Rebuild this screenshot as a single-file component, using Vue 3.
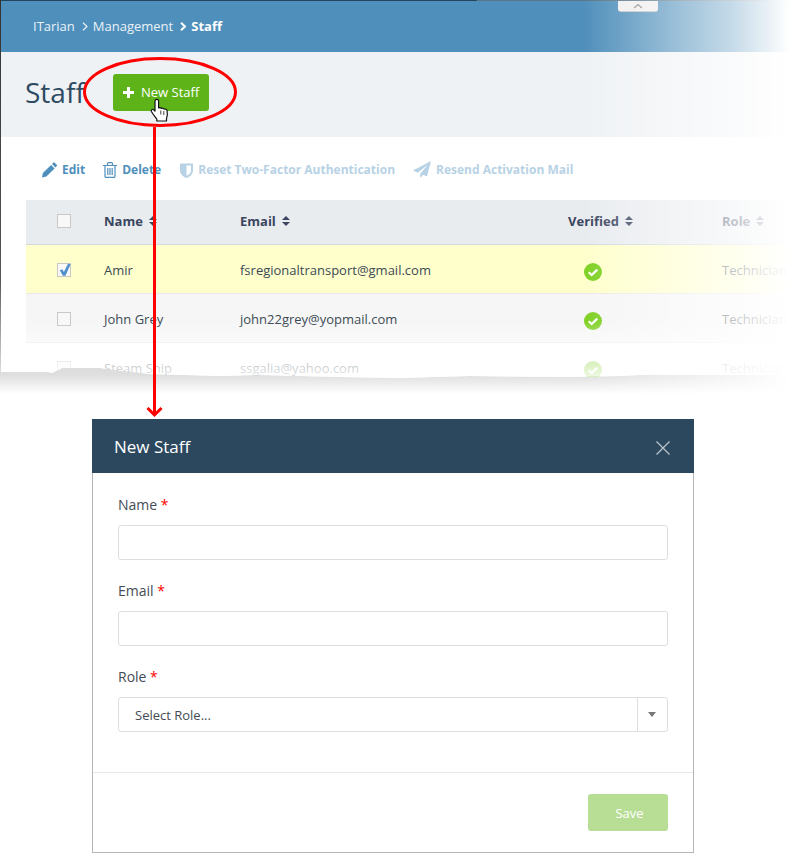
<template>
  <div class="page">
    <div class="shot-wrap">
      <div class="tear-shadow"></div>
      <div class="shot">
        <header class="crumbs">
          <span>ITarian</span>
          <svg class="sep" width="6" height="9" viewBox="0 0 6 9"><path d="M1 .7l4 3.800-4 3.800" fill="none" stroke="currentColor" stroke-width="1.200" /></svg>
          <span>Management</span>
          <svg class="sep" width="6" height="9" viewBox="0 0 6 9"><path d="M1 .7l4 3.800-4 3.800" fill="none" stroke="#fff" stroke-width="2" /></svg>
          <strong>Staff</strong>
        </header>
        <div class="title-row">
          <h1>Staff</h1>
          <button class="new-btn" type="button">
            <svg width="11" height="11" viewBox="0 0 11 11"><path d="M4 0h3v4h4v3H7v4H4V7H0V4h4z" fill="#fff" /></svg>
            New Staff
          </button>
        </div>
        <div class="toolbar">
          <span class="tool tool-edit">
            <svg width="16" height="16" viewBox="0 0 16 16"><path d="M1 15.500l.9-4.400 8.200-8.200 3.500 3.500-8.200 8.200zM11 2l1.300-1.300a1 1 0 0 1 1.400 0l2 2a1 1 0 0 1 0 1.400L14.500 5.400z" fill="currentColor" /></svg>
            Edit
          </span>
          <span class="tool tool-delete">
            <svg width="14" height="16" viewBox="0 0 14 16" fill="none" stroke="currentColor" stroke-width="1.200"><path d="M0 3.500h14M2 3.500v10.700a1.200 1.200 0 0 0 1.200 1.200h7.600a1.200 1.200 0 0 0 1.200-1.200V3.500M4.500 3.500V1.800a1.200 1.200 0 0 1 1.200-1.200h2.600a1.200 1.200 0 0 1 1.200 1.200v1.700M4.800 6v7M7 6v7M9.200 6v7" /></svg>
            Delete
          </span>
          <span class="tool tool-reset off">
            <svg width="13" height="16" viewBox="0 0 13 16"><path d="M0 1.500h13v7c0 3.500-3 6-6.500 7.500C3 14.500 0 12 0 8.500z" fill="currentColor" /><path d="M6.500 3.500h4.500v5c0 2.400-2 4.200-4.500 5.300z" fill="#fff" /></svg>
            Reset Two-Factor Authentication
          </span>
          <span class="tool tool-mail off">
            <svg width="18" height="17" viewBox="0 0 18 17"><path d="M18 0L0 9.500l4.800 2.200L15 3.500 7.200 12.800V17l2.900-3.300 3.900 1.700z" fill="currentColor" /></svg>
            Resend Activation Mail
          </span>
        </div>
        <div class="table">
          <div class="row head">
            <div><span class="box"></span></div>
            <div v-for="col in columns" :key="col" class="th">
              {{ col }}
              <svg width="8" height="10" viewBox="0 0 8 10"><path d="M4 0l4 4H0zM4 10L0 6h8z" fill="currentColor" /></svg>
            </div>
          </div>
          <div v-for="(staff, i) in rows" :key="staff.name" class="row" :class="{ picked: i === 0, grey: i === 1 }">
            <div>
              <span class="box">
                <svg v-if="i === 0" width="14" height="14" viewBox="0 0 14 14"><path d="M1.800 7.400l2.500-1.100 1.600 2.800L10 .8l2.600.5-5.200 11.500H5z" fill="#4f8fca" /></svg>
              </span>
            </div>
            <div>{{ staff.name }}</div>
            <div>{{ staff.email }}</div>
            <div class="verified">
              <svg width="18" height="18" viewBox="0 0 18 18"><circle cx="9" cy="9" r="9" fill="#7fd124" /><path d="M4.700 9.200l3 2.800 5.600-5.400" fill="none" stroke="#fff" stroke-width="2.200" /></svg>
            </div>
            <div>Technician</div>
          </div>
        </div>
        <div class="fade-bottom"></div>
        <div class="scroll-tab">
          <svg width="10" height="6" viewBox="0 0 10 6"><path d="M1 5l4-3.500L9 5" fill="none" stroke="#8a8a8a" stroke-width="1.300" /></svg>
        </div>
      </div>
      <div class="fade-right"></div>
    </div>

    <section class="modal">
      <div class="modal-head">
        <span>New Staff</span>
        <svg class="close" width="14" height="14" viewBox="0 0 14 14"><path d="M.5.500l13 13M13.500.500l-13 13" stroke="#b9c4cd" stroke-width="1.300" /></svg>
      </div>
      <div class="modal-body">
        <div class="label">Name <em>*</em></div>
        <div class="input"></div>
        <div class="label">Email <em>*</em></div>
        <div class="input"></div>
        <div class="label">Role <em>*</em></div>
        <div class="input select">
          <span class="select-text">Select Role...</span>
          <span class="select-arrow"></span>
        </div>
      </div>
      <div class="modal-foot">
        <button class="save" type="button">Save</button>
      </div>
    </section>

    <svg class="notes" width="800" height="430" viewBox="0 0 800 430">
      <ellipse cx="160" cy="92" rx="75.500" ry="33.500" fill="none" stroke="#f00" stroke-width="3" />
      <path d="M154.500 127v288" stroke="#f00" stroke-width="3" fill="none" />
      <path d="M147.500 408l7 7 7-7" stroke="#f00" stroke-width="3" fill="none" />
      <path d="M155 101c0-2.200 3.600-2.200 3.600 0v7c1-.8 2.400-.4 2.800.5.800-.6 2.300-.3 2.700.7 1-.5 2.800.1 3 1.500.5 3 .2 6-.6 7.800v2.500h-9.700v-2c-1.700-2.200-3.900-4.700-5.400-7.500-.8-1.500 1.100-2.900 2.300-1.700l1.300 1.300z" fill="#fff" stroke="#111" stroke-width="1.200" stroke-linejoin="round" />
      <path d="M160.800 110.500v4M163.800 111v4" stroke="#111" stroke-width=".8" />
    </svg>
  </div>
</template>

<script setup>
const columns = ['Name', 'Email', 'Verified', 'Role']

const rows = [
  { name: 'Amir', email: 'fsregionaltransport@gmail.com' },
  { name: 'John Grey', email: 'john22grey@yopmail.com' },
  { name: 'Steam Ship', email: 'ssgalia@yahoo.com' },
]
</script>

<style>
body {
  background: #fff;
}
</style>

<style scoped>
.page {
  position: relative;
  width: 800px;
  height: 855px;
  overflow: hidden;
  background: #fff;
  font-family: "Open Sans", "Liberation Sans", sans-serif;
  font-size: 13px;
  color: #3c4a55;
}

.shot-wrap {
  position: relative;
  height: 400px;
  margin-bottom: 19px;
}

.tear-shadow {
  position: absolute;
  left: 0;
  right: 0;
  top: 366px;
  height: 28px;
  background: linear-gradient(to bottom, #dcdcdc 0, #dedede 30%, #fff 100%);
}

.shot {
  position: relative;
  height: 380px;
  overflow: hidden;
  background: #fff;
  clip-path: polygon(0 372px, 48px 372px, 52px 373px, 62px 368px, 100px 368px, 115px 370px, 150px 374px, 220px 376px, 260px 375px, 340px 377px, 400px 378px, 470px 376px, 570px 377px, 620px 376px, 640px 375px, 800px 375px, 800px 0, 0 0);
}

.shot::before {
  content: "";
  position: absolute;
  left: 0;
  top: 0;
  z-index: 1;
  width: 1px;
  height: 372px;
  background: linear-gradient(to bottom, #333 0, #555 75%, #ddd 100%);
}

.crumbs {
  display: flex;
  align-items: center;
  height: 52px;
  padding: 0 0 1px 33px;
  box-sizing: border-box;
  background: #4f8fbb;
  border-top: 1px solid #2a4a5e;
  border-image: linear-gradient(to right, #24455b 476px, #5c7688 477px) 1;
  color: #eaf2f7;
  font-size: 13px;
}

.crumbs strong {
  color: #fff;
  font-weight: 700;
}

.sep {
  margin: 1px 5px 0 7px;
}

.title-row {
  display: flex;
  align-items: center;
  height: 85px;
  padding: 0 0 5px 25px;
  box-sizing: border-box;
  background: #eff2f5;
}

.title-row h1 {
  margin: 0;
  width: 88px;
  font-size: 28px;
  font-weight: 400;
  color: #2d4a62;
}

.new-btn {
  display: flex;
  align-items: center;
  gap: 7px;
  width: 96px;
  height: 37px;
  padding: 0 0 0 10px;
  border: 0;
  border-radius: 3px;
  background: #5eb319;
  color: #fff;
  font: 400 13px "Open Sans", sans-serif;
}

.toolbar {
  display: flex;
  align-items: center;
  height: 63px;
  padding: 2px 0 0 41px;
  box-sizing: border-box;
  font-size: 12px;
  font-weight: 700;
  color: #4f8fbb;
}

.tool {
  display: flex;
  align-items: center;
  gap: 5px;
}

.tool-edit {
  margin-right: 18px;
}

.tool-delete {
  margin-right: 19px;
}

.tool-reset {
  margin-right: 18px;
}

.off {
  color: #b7d2e5;
}

.table {
  margin-left: 26px;
}

.row {
  display: grid;
  grid-template-columns: 78px 136px 328px 154px 1fr;
  align-items: center;
  height: 49px;
  padding-top: 1px;
  box-sizing: border-box;
  border-bottom: 1px solid #e9e9e9;
}

.row > div:first-child {
  display: flex;
  padding-left: 31px;
}

.row.head {
  height: 45px;
  padding: 0 0 3px;
  background: #e9ecef;
  border-bottom: 1px solid #d5d9de;
}

.th {
  display: flex;
  align-items: center;
  gap: 6px;
  font-size: 13px;
  font-weight: 700;
  color: #3a4560;
}

.row.picked {
  background: #ffffcc;
}

.row.grey {
  background: #f6f6f6;
}

.box {
  display: block;
  position: relative;
  width: 14px;
  height: 14px;
  box-sizing: border-box;
  border: 1px solid #c8c8c8;
  background: #f8f8f8;
}

.box svg {
  position: absolute;
  left: 0;
  top: -1px;
}

.verified {
  display: flex;
  padding: 4px 0 0 16px;
}

.fade-bottom {
  position: absolute;
  left: 0;
  right: 0;
  top: 322px;
  height: 58px;
  background: linear-gradient(to bottom, rgba(255, 255, 255, 0) 0, rgba(255, 255, 255, 0.5) 40%, rgba(255, 255, 255, 0.72) 75%, rgba(255, 255, 255, 0.9) 100%);
}

.scroll-tab {
  position: absolute;
  left: 618px;
  top: 1px;
  display: flex;
  align-items: center;
  justify-content: center;
  width: 40px;
  height: 10px;
  background: #efefef;
  border-bottom: 1px solid #c4c4c4;
  border-radius: 0 0 3px 3px;
}

.fade-right {
  position: absolute;
  inset: 0;
  background: linear-gradient(to right, rgba(255, 255, 255, 0) 583px, rgba(255, 255, 255, 0.45) 680px, rgba(255, 255, 255, 0.68) 733px, #fff 790px);
}

.modal {
  width: 602px;
  margin-left: 92px;
  box-sizing: border-box;
  border: 1px solid #b5b5b5;
  border-top: 0;
  background: #fff;
}

.modal-head {
  display: flex;
  align-items: center;
  justify-content: space-between;
  height: 54px;
  margin: 0 -1px;
  padding: 0 24px 0 22px;
  box-sizing: border-box;
  background: #2b485e;
  color: #fff;
  font-size: 17px;
}

.close {
  margin-top: 3px;
}

.modal-body {
  padding: 22px 25px 40px;
  border-bottom: 1px solid #e8e8e8;
}

.label {
  height: 20px;
  margin-bottom: 10px;
  font-size: 14px;
  line-height: 20px;
  color: #444c55;
}

.label em {
  font-style: normal;
  color: #f00;
}

.input {
  height: 35px;
  margin-bottom: 21px;
  box-sizing: border-box;
  border: 1px solid #dcdfe2;
  border-radius: 3px;
}

.input:last-child {
  margin-bottom: 0;
}

.select {
  display: flex;
  align-items: center;
  justify-content: space-between;
  font-size: 13px;
  color: #444c55;
}

.select-text {
  padding-left: 16px;
}

.select-arrow {
  position: relative;
  width: 30px;
  height: 100%;
  box-sizing: border-box;
  border-left: 1px solid #dcdfe2;
}

.select-arrow::after {
  content: "";
  position: absolute;
  left: 10px;
  top: 14px;
  border: 4px solid transparent;
  border-top: 5px solid #777;
  border-bottom: 0;
}

.modal-foot {
  display: flex;
  justify-content: flex-end;
  padding: 21px 25px;
}

.save {
  width: 80px;
  height: 37px;
  padding: 0 0 0 3px;
  border: 0;
  border-radius: 3px;
  background: #b8de96;
  color: #fff;
  font: 400 13px "Open Sans", sans-serif;
}

.notes {
  position: absolute;
  left: 0;
  top: 0;
  pointer-events: none;
}
</style>
